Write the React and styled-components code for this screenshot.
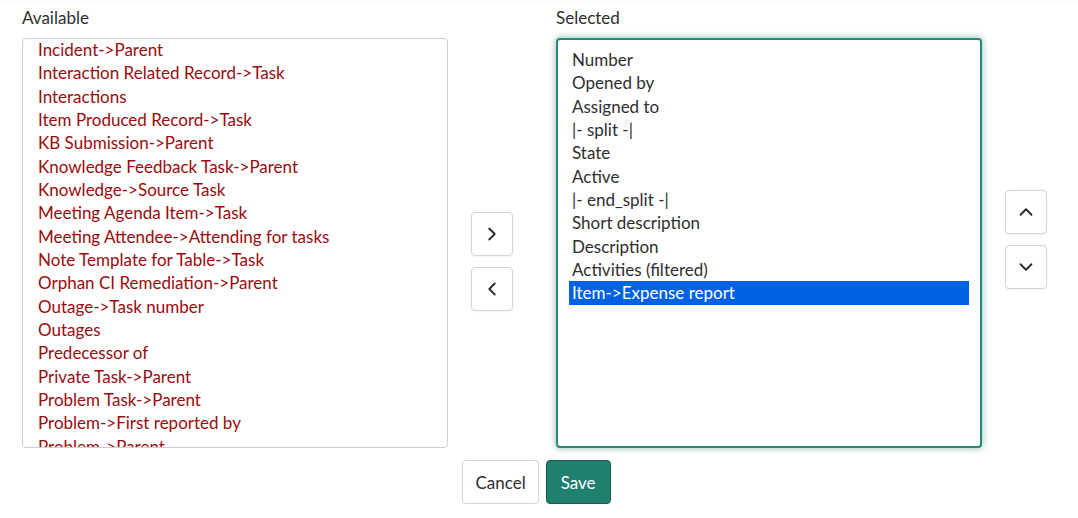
import React from "react";
import styled, { createGlobalStyle } from "styled-components";
import { ChevronRight, ChevronLeft, ChevronUp, ChevronDown } from "lucide-react";

const GlobalStyle = createGlobalStyle`
  body {
    margin: 0;
    background: #fff;
    font-family: Lato, "Open Sans", sans-serif;
    color: #2e2e2e;
  }
`;

const TopEdge = styled.div`
  height: 1px;
  box-shadow: 0 1px 4px rgba(0, 0, 0, 0.12);
`;

const Page = styled.div`
  padding: 6px 0 0 22px;
  width: 1025px;
`;

const Columns = styled.div`
  display: flex;
  align-items: flex-start;
`;

const Column = styled.div`
  display: flex;
  flex-direction: column;
  flex: 0 0 426px;
  width: 426px;
`;

const Label = styled.div`
  font-size: 17px;
  line-height: 22px;
  height: 22px;
  margin-bottom: 9px;
  color: #2e2e2e;
`;

const ListBox = styled.div`
  box-sizing: border-box;
  height: 410px;
  overflow: hidden;
  background: #fff;
  border: ${(p) => (p.focused ? "2px solid #2b8877" : "1px solid #cfcfcf")};
  border-radius: 4px;
  padding: ${(p) => (p.focused ? "8px 11px" : "0 12px")};
  box-shadow: ${(p) => (p.focused ? "0 0 6px 1px rgba(43, 136, 119, 0.45)" : "none")};
`;

const ListInner = styled.div`
  margin-top: ${(p) => p.offset || 0}px;
`;

const Option = styled.div`
  font-size: 17px;
  line-height: 23.33px;
  height: 23.33px;
  padding: 0 3px;
  white-space: nowrap;
  color: ${(p) => (p.selected ? "#fff" : p.red ? "#9b0a0e" : "#2e2e2e")};
  background: ${(p) => (p.selected ? "#0062e0" : "transparent")};
`;

const ButtonStack = styled.div`
  display: flex;
  flex-direction: column;
  flex-shrink: 0;
  gap: 11px;
  padding-top: ${(p) => p.top}px;
  margin: 0 ${(p) => p.right}px 0 ${(p) => p.left}px;
`;

const IconButton = styled.button`
  width: 42px;
  height: 44px;
  display: flex;
  align-items: center;
  justify-content: center;
  padding: 0;
  background: #fff;
  border: 1px solid #d4d4d4;
  border-radius: 4px;
  color: #2a2a2a;
  box-shadow: 0 1px 2px rgba(0, 0, 0, 0.05);
`;

const Footer = styled.div`
  display: flex;
  justify-content: center;
  gap: 7px;
  margin-top: 12px;
  padding-left: 4px;
`;

const Button = styled.button`
  height: 44px;
  padding: 0 ${(p) => (p.primary ? "14px" : "12px")};
  font-family: Lato, "Open Sans", sans-serif;
  font-size: 17px;
  border-radius: 4px;
  border: 1px solid ${(p) => (p.primary ? "#135e51" : "#d4d4d4")};
  background: ${(p) => (p.primary ? "#1f8070" : "#fff")};
  color: ${(p) => (p.primary ? "#fff" : "#2e2e2e")};
`;

const available = [
  "Incident->Parent",
  "Interaction Related Record->Task",
  "Interactions",
  "Item Produced Record->Task",
  "KB Submission->Parent",
  "Knowledge Feedback Task->Parent",
  "Knowledge->Source Task",
  "Meeting Agenda Item->Task",
  "Meeting Attendee->Attending for tasks",
  "Note Template for Table->Task",
  "Orphan CI Remediation->Parent",
  "Outage->Task number",
  "Outages",
  "Predecessor of",
  "Private Task->Parent",
  "Problem Task->Parent",
  "Problem->First reported by",
  "Problem->Parent",
];

const selected = [
  "Number",
  "Opened by",
  "Assigned to",
  "|- split -|",
  "State",
  "Active",
  "|- end_split -|",
  "Short description",
  "Description",
  "Activities (filtered)",
  "Item->Expense report",
];

const App = () => {
  return (
    <>
      <GlobalStyle />
      <TopEdge />
      <Page>
        <Columns>
          <Column>
            <Label>Available</Label>
            <ListBox>
              <ListInner offset={-1}>
                {available.map((item) => (
                  <Option key={item} red>{item}</Option>
                ))}
              </ListInner>
            </ListBox>
          </Column>
          <ButtonStack top={205} left={23} right={43}>
            <IconButton><ChevronRight size={22} strokeWidth={2} /></IconButton>
            <IconButton><ChevronLeft size={22} strokeWidth={2} /></IconButton>
          </ButtonStack>
          <Column>
            <Label>Selected</Label>
            <ListBox focused>
              {selected.map((item, i) => (
                <Option key={item} selected={i === selected.length - 1}>{item}</Option>
              ))}
            </ListBox>
          </Column>
          <ButtonStack top={183} left={23} right={0}>
            <IconButton><ChevronUp size={22} strokeWidth={2} /></IconButton>
            <IconButton><ChevronDown size={22} strokeWidth={2} /></IconButton>
          </ButtonStack>
        </Columns>
        <Footer>
          <Button>Cancel</Button>
          <Button primary>Save</Button>
        </Footer>
      </Page>
    </>
  );
};

export default App;
